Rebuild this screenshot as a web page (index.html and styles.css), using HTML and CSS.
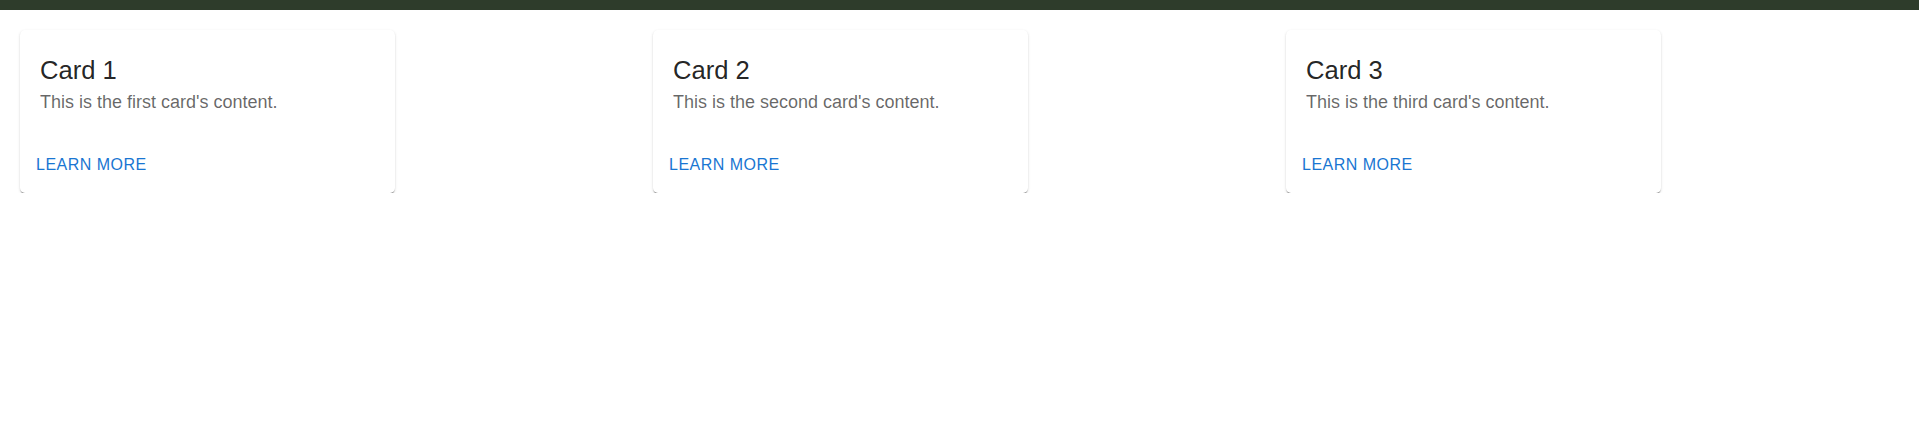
FILE: index.html
```html
<!DOCTYPE html>
<html lang="en">
<head>
<meta charset="utf-8">
<title>Cards</title>
<link rel="stylesheet" href="styles.css">
</head>
<body>
<div class="topbar"></div>
<main class="grid">
  <div class="cell">
    <div class="card">
      <div class="card-content">
        <h5 class="card-title">Card 1</h5>
        <p class="card-text">This is the first card's content.</p>
      </div>
      <div class="card-actions">
        <button class="btn">Learn More</button>
      </div>
    </div>
  </div>
  <div class="cell">
    <div class="card">
      <div class="card-content">
        <h5 class="card-title">Card 2</h5>
        <p class="card-text">This is the second card's content.</p>
      </div>
      <div class="card-actions">
        <button class="btn">Learn More</button>
      </div>
    </div>
  </div>
  <div class="cell">
    <div class="card">
      <div class="card-content">
        <h5 class="card-title">Card 3</h5>
        <p class="card-text">This is the third card's content.</p>
      </div>
      <div class="card-actions">
        <button class="btn">Learn More</button>
      </div>
    </div>
  </div>
</main>
</body>
</html>
```
FILE: styles.css
```css
html, body {
  margin: 0;
  padding: 0;
  background: #ffffff;
  font-family: "Liberation Sans", Arial, sans-serif;
}

.topbar {
  height: 10px;
  background: #2e3c2b;
}

.grid {
  display: grid;
  grid-template-columns: repeat(3, 1fr);
  padding: 20px 0 0 20px;
}

.card {
  width: 375px;
  height: 163px;
  box-sizing: border-box;
  background: #fff;
  border-radius: 5px;
  box-shadow: 0 2px 1px -1px rgba(0,0,0,0.28), 0 1px 1px 0 rgba(0,0,0,0.16), 0 1px 3px 0 rgba(0,0,0,0.12);
  display: flex;
  flex-direction: column;
  justify-content: space-between;
}

.card-content {
  padding: 24px 20px 0 20px;
}

.card-title {
  margin: 0;
  font-size: 25.6px;
  font-weight: 400;
  line-height: 32px;
  color: rgba(0,0,0,0.87);
}

.card-text {
  margin: 3px 0 0 0;
  font-size: 18px;
  line-height: 26px;
  color: rgba(0,0,0,0.6);
}

.card-actions {
  padding: 10px;
  display: flex;
}

.btn {
  border: 0;
  background: transparent;
  padding: 4px 6px;
  font-family: inherit;
  font-size: 16px;
  line-height: 28px;
  letter-spacing: 0.03em;
  text-transform: uppercase;
  color: #1976d2;
  cursor: pointer;
  border-radius: 4px;
}
```
